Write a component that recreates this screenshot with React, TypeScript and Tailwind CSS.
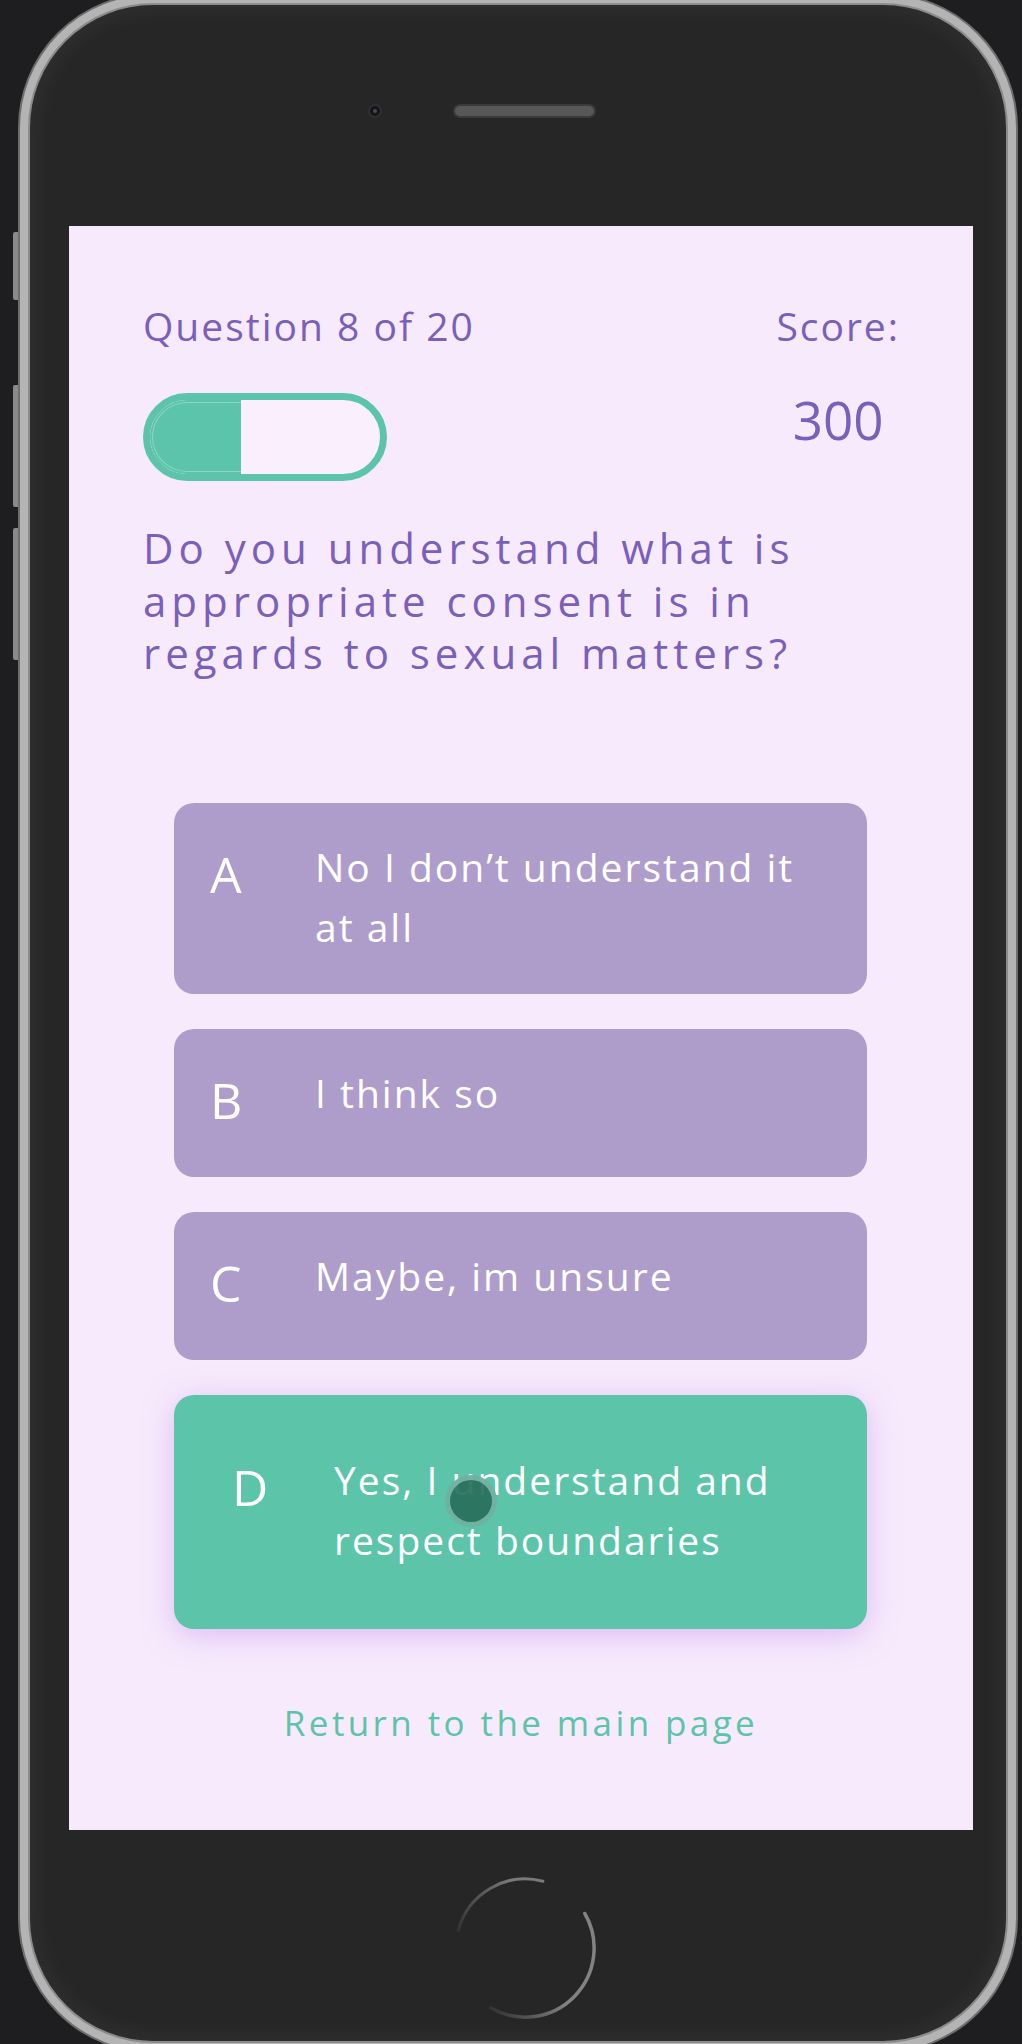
const answers = [
  { letter: "A", lines: ["No I don’t understand it", "at all"] },
  { letter: "B", lines: ["I think so"] },
  { letter: "C", lines: ["Maybe, im unsure"] },
];

const font = { fontFamily: "'Open Sans', 'Noto Sans', sans-serif" };

const AnswerCard = ({ letter, lines }: { letter: string; lines: string[] }) => (
  <div className="flex items-start w-[693px] min-h-[148px] rounded-[20px] bg-[#ae9dcb] pl-[36px] pt-[34px] pb-[37px] text-white">
    <span className="w-[105px] shrink-0 text-[50px] leading-[75px]">{letter}</span>
    <p className="text-[39px] leading-[60px] tracking-[2px]">
      {lines.map((l, i) => (
        <span key={i} className="block whitespace-nowrap">{l}</span>
      ))}
    </p>
  </div>
);

export default function App() {
  return (
    <div className="w-[1022px] h-[2044px] bg-[#1e1e20] overflow-hidden flex" style={font}>
      {/* side buttons */}
      <div className="w-[18px] shrink-0 flex flex-col items-end pt-[232px]">
        <div className="w-[5px] h-[68px] rounded-l-[2px] bg-[#8a8a8a]" />
        <div className="w-[5px] h-[122px] rounded-l-[2px] bg-[#8a8a8a] mt-[85px]" />
        <div className="w-[5px] h-[132px] rounded-l-[2px] bg-[#8a8a8a] mt-[21px]" />
      </div>

      {/* phone body */}
      <div className="w-[1000px] h-[2060px] -mt-[7px] shrink-0 rounded-[135px] border-[2px] border-[#6e6e6e] bg-[#b4b4b4] p-[8px]">
        <div className="w-full h-full rounded-[125px] border-[2px] border-[#8c8c8c] bg-[#262626] shadow-[inset_0_0_28px_rgba(255,255,255,0.07)] flex flex-col">
          {/* camera + speaker */}
          <div className="flex items-center pl-[338px] pt-[99px]">
            <div className="w-[14px] h-[14px] rounded-full bg-[#161618] border-[2px] border-[#303034] flex items-center justify-center">
              <div className="w-[4px] h-[4px] rounded-full bg-[#4a4a55]" />
            </div>
            <div className="ml-[71px] w-[143px] h-[14px] rounded-full bg-[#575757] border-[2px] border-[#3a3a3a]" />
          </div>

          {/* screen */}
          <div className="ml-[39px] mt-[108px] w-[904px] h-[1604px] shrink-0 bg-[#f7eafc] flex flex-col">
            <div className="flex justify-between pl-[74px] pr-[73px] pt-[76px] text-[#7a60ba]">
              <div className="flex flex-col">
                <span className="text-[39px] leading-[48px] tracking-[2px]">Question 8 of 20</span>
                <div className="mt-[43px] w-[244px] h-[88px] rounded-full border-[7px] border-[#5cc4aa] bg-[#f9effd] overflow-hidden">
                  <div className="w-[91px] h-full bg-[#5cc4aa] p-[2px] pr-0">
                    <div className="w-full h-full rounded-l-full border-[1px] border-r-0 border-[rgba(255,255,255,0.3)]" />
                  </div>
                </div>
              </div>
              <div className="flex flex-col items-center">
                <span className="text-[39px] leading-[48px] tracking-[2px]">Score:</span>
                <span className="mt-[43px] text-[53px] leading-[54px]">300</span>
              </div>
            </div>

            <p className="pl-[74px] mt-[41px] text-[42px] leading-[52.5px] tracking-[5px] text-[#7a60ba]">
              Do you understand what is<br />
              appropriate consent is in<br />
              regards to sexual matters?
            </p>

            <div className="ml-[105px] mt-[123px] flex flex-col gap-[35px]">
              {answers.map((a) => (
                <AnswerCard key={a.letter} letter={a.letter} lines={a.lines} />
              ))}
              <div className="relative flex items-start w-[693px] rounded-[20px] bg-[#5bc4a9] pl-[58px] pt-[55px] pb-[59px] text-white shadow-[0_6px_30px_rgba(200,150,240,0.55)]">
                <span className="w-[102px] shrink-0 text-[50px] leading-[75px]">D</span>
                <p className="text-[39px] leading-[60px] tracking-[2px]">
                  <span className="block whitespace-nowrap">Yes, I understand and</span>
                  <span className="block whitespace-nowrap">respect boundaries</span>
                </p>
                {/* touch indicator */}
                <div className="absolute left-[271px] top-[80px] w-[52px] h-[52px] rounded-full border-[5px] border-[rgba(170,230,215,0.55)] bg-[rgba(40,110,90,0.92)]" />
              </div>
            </div>

            <p className="mt-[70px] text-center text-[35px] leading-[48px] tracking-[3.4px] text-[#5bc4a9]">
              Return to the main page
            </p>
          </div>

          {/* home button */}
          <div className="ml-[424px] mt-[47px] w-[142px] h-[142px]">
            <svg width="142" height="142" viewBox="0 0 142 142" fill="none">
              <defs>
                <linearGradient id="arcTop" gradientUnits="userSpaceOnUse" x1="4" y1="55" x2="60" y2="6">
                  <stop offset="0" stopColor="#6a6a6a" stopOpacity="0.2" />
                  <stop offset="1" stopColor="#7a7a7a" />
                </linearGradient>
                <linearGradient id="arcBottom" gradientUnits="userSpaceOnUse" x1="36" y1="131" x2="110" y2="118">
                  <stop offset="0" stopColor="#6a6a6a" stopOpacity="0.2" />
                  <stop offset="1" stopColor="#828282" />
                </linearGradient>
              </defs>
              <path d="M4.4 53.1 A69 69 0 0 1 88.9 4.3" stroke="url(#arcTop)" strokeWidth="3" strokeLinecap="round" />
              <path d="M130.8 36.5 A69 69 0 0 1 36.5 130.8" stroke="url(#arcBottom)" strokeWidth="3.5" strokeLinecap="round" />
            </svg>
          </div>
        </div>
      </div>
    </div>
  );
}
